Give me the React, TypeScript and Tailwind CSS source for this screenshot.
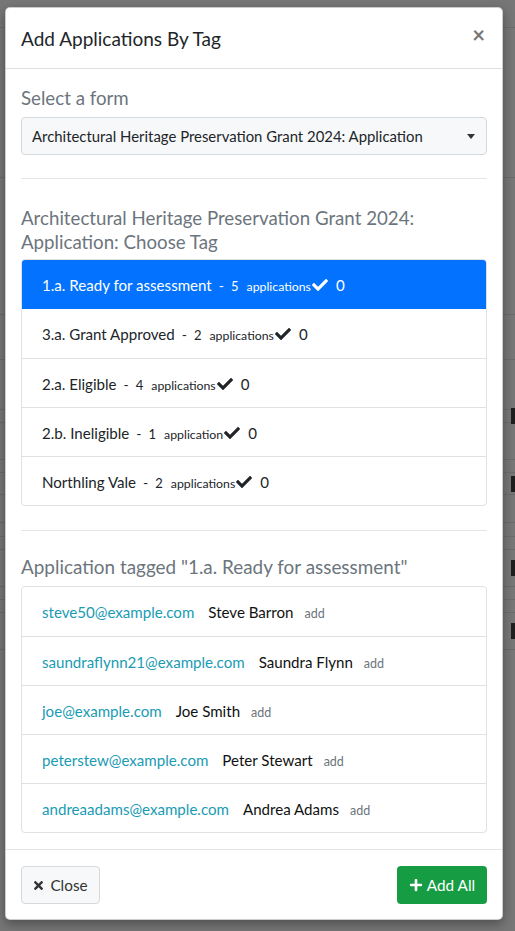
import { FaCheck, FaTimes, FaPlus } from "react-icons/fa";

const TAGS = [
  { name: "1.a. Ready for assessment", count: 5 },
  { name: "3.a. Grant Approved", count: 2 },
  { name: "2.a. Eligible", count: 4 },
  { name: "2.b. Ineligible", count: 1 },
  { name: "Northling Vale", count: 2 },
];

const APPLICANTS = [
  { email: "steve50@example.com", name: "Steve Barron" },
  { email: "saundraflynn21@example.com", name: "Saundra Flynn" },
  { email: "joe@example.com", name: "Joe Smith" },
  { email: "peterstew@example.com", name: "Peter Stewart" },
  { email: "andreaadams@example.com", name: "Andrea Adams" },
];

// dimmed page rows peeking out behind the modal
const BG_ROWS = [
  { h: 28, mark: false },
  { h: 150, mark: false },
  { h: 137, mark: false },
  { h: 45, mark: false },
  { h: 50, mark: false },
  { h: 13, mark: true },
  { h: 37, mark: false },
  { h: 13, mark: false },
  { h: 22, mark: true },
  { h: 28, mark: false },
  { h: 14, mark: false },
  { h: 13, mark: false },
  { h: 37, mark: true },
  { h: 13, mark: false },
  { h: 13, mark: false },
  { h: 37, mark: true },
];

export default function App() {
  return (
    <div
      className="relative h-[931px] w-[515px] overflow-hidden bg-[#777777]"
      style={{ fontFamily: "Lato, 'Noto Sans', sans-serif" }}
    >
      {/* Page behind the backdrop */}
      <div className="flex flex-col">
        {BG_ROWS.map((r, i) => (
          <div
            key={i}
            className="flex items-center justify-end border-b border-[#6b6b6b]"
            style={{ height: r.h }}
          >
            {r.mark && <span className="h-[16px] w-[4px] bg-[#1f1f1f]" />}
          </div>
        ))}
      </div>

      {/* Modal */}
      <div className="absolute inset-0 pl-[5px] pt-[7px]">
        <div className="flex w-[498px] flex-col rounded-[5px] border border-black/20 bg-white shadow-[0_4px_12px_rgba(0,0,0,0.35)]">
          {/* Header */}
          <div className="flex h-[61px] items-center justify-between border-b border-[#dee2e6] px-[15px] pt-[2px]">
            <h5 className="text-[19px] leading-[30px] text-[#212529]">Add Applications By Tag</h5>
            <span className="mr-[2px] -mt-[8px] text-[22px] font-bold leading-none text-[#777]">×</span>
          </div>

          {/* Body */}
          <div className="px-[15px] pt-[17px] pb-[16px]">
            <h5 className="text-[18.7px] leading-[24px] text-[#6c757d]">Select a form</h5>
            <div className="mt-[7px] flex h-[38px] items-center justify-between rounded-[4px] border border-[#d6d9dc] bg-[#f7f8f9] pl-[10px] pr-[11px]">
              <span className="text-[14.9px] text-[#212529]">
                Architectural Heritage Preservation Grant 2024: Application
              </span>
              <span className="h-0 w-0 border-x-[4px] border-t-[5px] border-x-transparent border-t-[#333]" />
            </div>

            <hr className="mt-[23px] border-t border-[#e3e5e7]" />

            <h5 className="mt-[27px] text-[18.7px] leading-[24px] text-[#6c757d]">
              Architectural Heritage Preservation Grant 2024:
              <br />
              Application: Choose Tag
            </h5>

            <div className="mt-[5px] flex flex-col overflow-hidden rounded-[4px] border border-[#dfe1e3]">
              {TAGS.map((t, i) => {
                const active = i === 0;
                return (
                  <div
                    key={t.name}
                    className={`flex h-[49px] items-center px-[20px] pt-[3px] ${
                      active ? "bg-[#0373ff] text-white" : "text-[#212529]"
                    } ${i > 1 ? "border-t border-[#dfe1e3]" : ""}`}
                  >
                    <span className="text-[15.1px] leading-[24px]">
                      {t.name}
                      <span className="mx-[7px] text-[14px]">-</span>
                      <span className="text-[13px]">{t.count}</span>
                      <span className="ml-[8px] text-[12.3px]">
                        {t.count === 1 ? "application" : "applications"}
                      </span>
                      <FaCheck className="ml-[1px] inline h-[16px] w-[16px] align-[-2px]" />
                      <span className="ml-[8px]">0</span>
                    </span>
                  </div>
                );
              })}
            </div>

            <hr className="mt-[24px] border-t border-[#e3e5e7]" />

            <h5 className="mt-[24px] text-[18.9px] leading-[24px] text-[#6c757d]">
              Application tagged "1.a. Ready for assessment"
            </h5>

            <div className="mt-[7px] flex flex-col rounded-[4px] border border-[#dfe1e3]">
              {APPLICANTS.map((a, i) => (
                <div
                  key={a.email}
                  className={`flex h-[49px] items-center px-[20px] pt-[3px] ${
                    i > 0 ? "border-t border-[#dfe1e3]" : ""
                  }`}
                >
                  <span className="text-[15.1px] leading-[24px]">
                    <span className="text-[#1a9bb3]">{a.email}</span>
                    <span className="ml-[14px] text-[#111]">{a.name}</span>
                    <span className="ml-[11px] text-[12.5px] text-[#6c757d]">add</span>
                  </span>
                </div>
              ))}
            </div>
          </div>

          {/* Footer */}
          <div className="flex items-center justify-between border-t border-[#e3e5e7] px-[15px] pt-[16px] pb-[15px]">
            <button className="flex h-[38px] w-[79px] items-center justify-center gap-[6px] rounded-[4px] border border-[#d6d9dc] bg-[#f7f8f9] text-[15.3px] text-[#333]">
              <FaTimes className="h-[13px] w-[11px]" />
              Close
            </button>
            <button className="flex h-[38px] w-[90px] items-center justify-center gap-[4px] rounded-[4px] bg-[#169c43] text-[15.3px] text-white">
              <FaPlus className="h-[14px] w-[14px]" />
              Add All
            </button>
          </div>
        </div>
      </div>
    </div>
  );
}
